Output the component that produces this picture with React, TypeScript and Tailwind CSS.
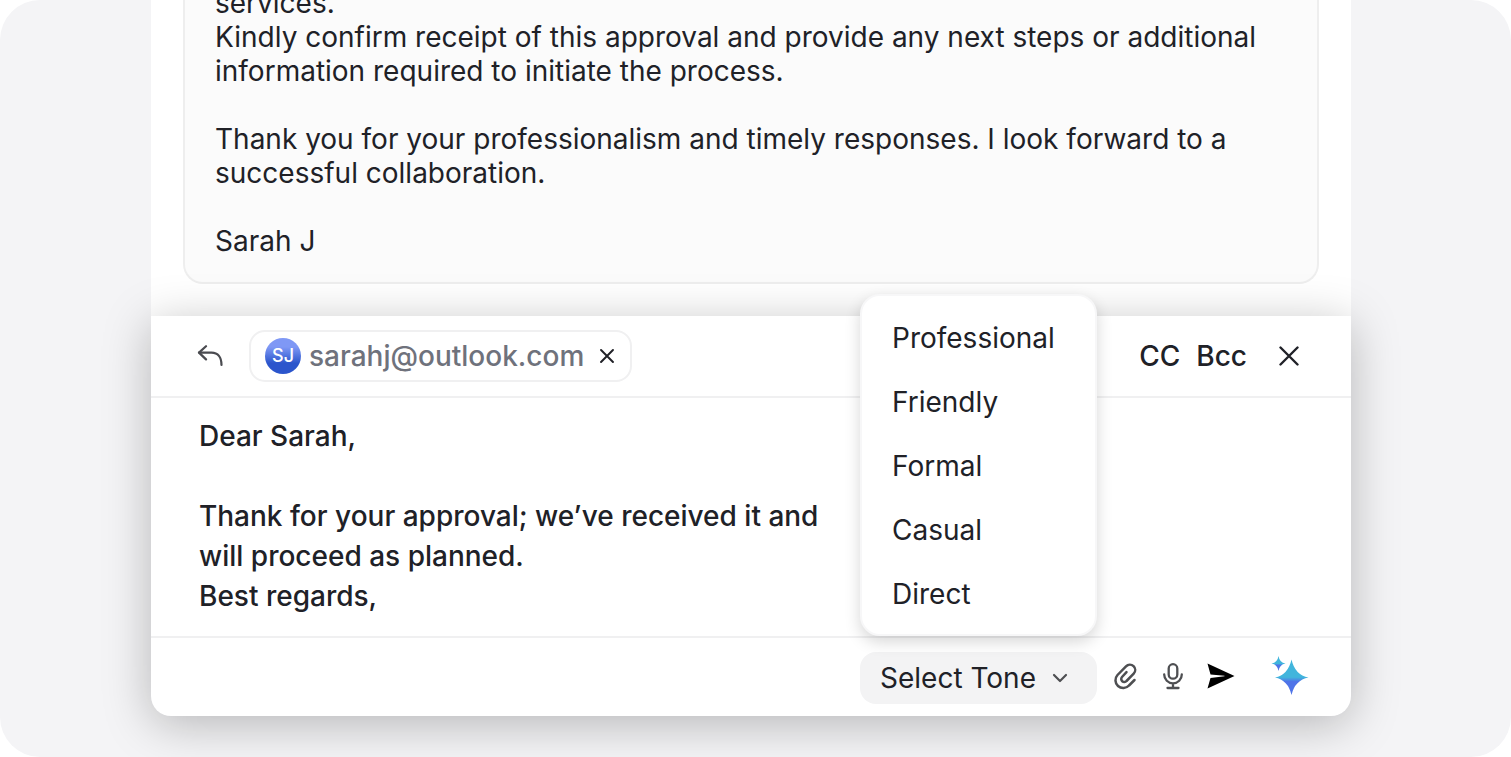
import React, { useState } from "react";

const TONES = ["Professional", "Friendly", "Formal", "Casual", "Direct"];

const DRAFT = `Dear Sarah,

Thank for your approval; we’ve received it and
will proceed as planned.
Best regards,`;

function ReplyIcon() {
  return (
    <svg width="26" height="22" viewBox="0 0 26 22" fill="none" stroke="currentColor" strokeWidth="2.2" strokeLinecap="round" strokeLinejoin="round">
      <path d="M9 1.2 2 7.6 9 14.4" />
      <path d="M2 7.6h12.500c6.500 0 10 4.500 10 12.400" />
    </svg>
  );
}

function CloseIcon({ size, stroke }: { size: number; stroke: number }) {
  return (
    <svg width={size} height={size} viewBox="0 0 20 20" fill="none" stroke="currentColor" strokeWidth={stroke} strokeLinecap="round">
      <path d="m1.500 1.500 17 17M18.500 1.500l-17 17" />
    </svg>
  );
}

function ChevronIcon() {
  return (
    <svg width="16" height="10" viewBox="0 0 16 10" fill="none" stroke="currentColor" strokeWidth="2.2" strokeLinecap="round" strokeLinejoin="round">
      <path d="m2 2 6 6 6-6" />
    </svg>
  );
}

function ClipIcon() {
  return (
    <svg width="24" height="28" viewBox="0 0 24 28" fill="none" stroke="currentColor" strokeWidth="2.500" strokeLinecap="round" strokeLinejoin="round">
      <path d="M21.500 18 16 23.500A7.700 7.700 0 0 1 4.500 13L13 4.300A5.300 5.300 0 0 1 20.700 11.700L13.500 19a3 3 0 0 1-4.500-4l4.500-4.800" />
    </svg>
  );
}

function MicIcon() {
  return (
    <svg width="22" height="28" viewBox="0 0 22 28" fill="none" stroke="currentColor" strokeWidth="2.300" strokeLinecap="round" strokeLinejoin="round">
      <rect x="6.700" y="2.200" width="8.600" height="14.500" rx="4.300" />
      <path d="M2.200 12.500a8.800 8.800 0 0 0 17.600 0M11 21.500V26M5.500 26h11" />
    </svg>
  );
}

function SendIcon() {
  return (
    <svg width="28" height="26" viewBox="0 0 28 26" fill="currentColor">
      <path d="M.5.500 27.500 13 .5 25.500 3.500 15 17.500 13.300v-.6L3.500 11.500z" />
    </svg>
  );
}

function SparkleIcon() {
  return (
    <svg width="38" height="40" viewBox="0 0 38 40">
      <defs>
        <linearGradient id="sparkle" x1="0" y1="0" x2="0" y2="1">
          <stop offset=".5" stopColor="#41b5dc" />
          <stop offset=".62" stopColor="#4f74e8" />
        </linearGradient>
      </defs>
      <path fill="url(#sparkle)" d="M20.500 3.500Q24 19 37.500 21.500 24 24 20.500 39 17 24 4 21.500 17 19 20.500 3.500z" />
      <path fill="url(#sparkle)" d="M7.500 0q1 6.500 7 7.500-6 1-7 7.500-1-6.500-7-7.500 6-1 7-7.500z" />
    </svg>
  );
}

export default function App() {
  const [draft, setDraft] = useState(DRAFT);
  const [tone, setTone] = useState("Select Tone");
  const [open, setOpen] = useState(true);
  const [hasRecipient, setHasRecipient] = useState(true);

  return (
    <div className="h-screen bg-white font-['Inter',sans-serif] text-[28px] text-[#202127]">
      <main className="flex h-full flex-col justify-end overflow-hidden rounded-[40px] bg-[#f4f4f6] pr-40 pb-[41px] pl-[151px]">
        <article className="bg-white px-8 pb-8">
          <div className="rounded-b-[20px] border-2 border-t-0 border-[#eeeeee] bg-[#fbfbfb] px-[30px] pb-6 leading-[34px]">
            <p>services.</p>
            <p>
              Kindly confirm receipt of this approval and provide any next steps or additional information required to
              initiate the process.
            </p>
            <p className="mt-[34px]">
              Thank you for your professionalism and timely responses. I look forward to a successful collaboration.
            </p>
            <p className="mt-[34px]">Sarah J</p>
          </div>
        </article>

        <section className="relative rounded-b-[20px] bg-white font-medium shadow-[0_8px_48px_rgba(0,0,0,0.26)]">
          <header className="flex h-20 items-center pr-[52px] pl-[46px]">
            <button type="button" aria-label="Reply" className="mr-[26px] text-[#4a4b50]">
              <ReplyIcon />
            </button>
            {hasRecipient && (
              <div className="flex h-[52px] items-center rounded-2xl border-2 border-[#f0f0f1] pr-4 pl-[14px] text-[#6f727c]">
                <span className="mr-2 flex size-9 items-center justify-center rounded-full bg-linear-to-b from-[#7f98f5] from-25% to-[#2b55cc] to-70% text-lg text-white">
                  SJ
                </span>
                <span>sarahj@outlook.com</span>
                <button type="button" aria-label="Remove recipient" onClick={() => setHasRecipient(false)} className="ml-4 text-[#202127]">
                  <CloseIcon size={14} stroke={2.8} />
                </button>
              </div>
            )}
            <div className="ml-auto flex items-center">
              <button type="button">CC</button>
              <button type="button" className="mr-8 ml-4">Bcc</button>
              <button type="button" aria-label="Close">
                <CloseIcon size={20} stroke={2.4} />
              </button>
            </div>
          </header>

          <textarea
            aria-label="Message"
            value={draft}
            onChange={(e) => setDraft(e.target.value)}
            className="block h-[242px] w-full resize-none border-y-2 border-[#f0f0f1] px-12 pt-[18px] leading-10 outline-none"
          />

          <footer className="flex h-[78px] items-start justify-end pt-[14px] pr-[42px] text-[#4e4f52]">
            <div className="relative mr-1 w-[237px] font-normal text-[#202127]">
              <button
                type="button"
                aria-haspopup="menu"
                aria-expanded={open}
                onClick={() => setOpen(!open)}
                className="flex h-[52px] w-full items-center rounded-2xl bg-[#f3f3f4] px-5"
              >
                {tone}
                <span className="ml-4 text-[#4e4f52]">
                  <ChevronIcon />
                </span>
              </button>
              {open && (
                <ul role="menu" className="absolute bottom-full left-0 z-10 mb-4 w-full rounded-[20px] border-2 border-[#f7f7f8] bg-white pt-[10px] pb-2 shadow-[0_6px_16px_rgba(0,0,0,0.16)]">
                  {TONES.map((t) => (
                    <li key={t} role="none">
                      <button
                        type="button"
                        role="menuitem"
                        onClick={() => {
                          setTone(t);
                          setOpen(false);
                        }}
                        className="h-16 w-full px-[30px] text-left"
                      >
                        {t}
                      </button>
                    </li>
                  ))}
                </ul>
              )}
            </div>
            <button type="button" aria-label="Attach file" className="flex h-12 w-12 items-center justify-center">
              <ClipIcon />
            </button>
            <button type="button" aria-label="Dictate" className="flex h-12 w-12 items-center justify-center">
              <MicIcon />
            </button>
            <button type="button" aria-label="Send" className="flex h-12 w-12 items-center justify-center text-black">
              <SendIcon />
            </button>
            <button type="button" aria-label="Write with AI" className="ml-[26px] flex h-12 items-center">
              <SparkleIcon />
            </button>
          </footer>
        </section>
      </main>
    </div>
  );
}
